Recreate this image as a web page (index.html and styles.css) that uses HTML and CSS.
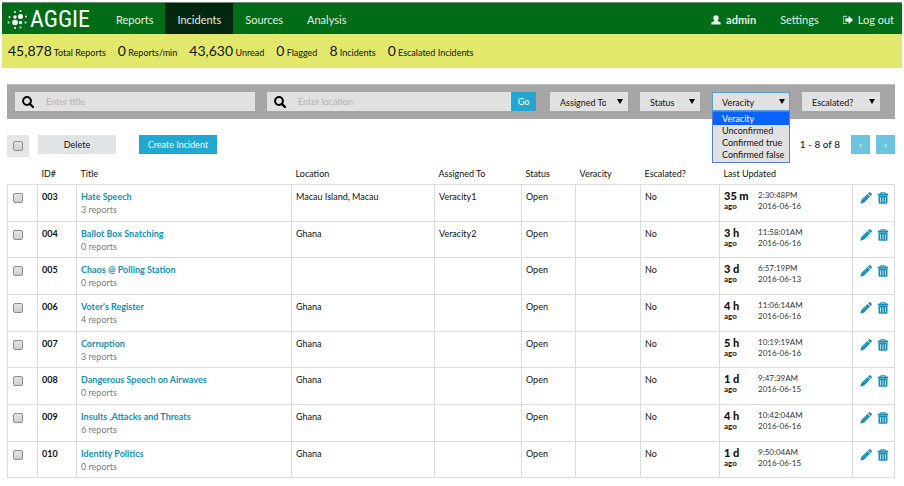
FILE: index.html
```html
<!DOCTYPE html>
<html lang="en">
<head>
<meta charset="utf-8">
<title>Aggie - Incidents</title>
<link rel="stylesheet" href="styles.css">
</head>
<body>
<svg class="sprite" aria-hidden="true">
  <symbol id="pencil" viewBox="0 0 12 12"><path d="M8 1.4L9 0.4Q9.7 -0.2 10.4 0.4L11.6 1.6Q12.2 2.3 11.6 3L10.6 4ZM7.4 2L10 4.6L4.2 10.5L0.3 11.7L1.5 7.8Z"/><path d="M3.2 8L7.6 3.6" stroke="#fff" stroke-opacity=".4" stroke-width=".6"/></symbol>
  <symbol id="trash" viewBox="0 0 12 12"><path fill-rule="evenodd" d="M4 0.2H8Q8.7 0.2 8.7 0.9V1.4H10.6Q11.2 1.4 11.2 2V3.4H0.8V2Q0.8 1.4 1.4 1.4H3.3V0.9Q3.3 0.2 4 0.2ZM4.5 1V1.4H7.5V1ZM1.5 3.8H10.5V10.8Q10.5 11.8 9.5 11.8H2.5Q1.5 11.8 1.5 10.8ZM3.3 5.2V10.4H4V5.2ZM5.6 5.2V10.4H6.4V5.2ZM8 5.2V10.4H8.7V5.2Z"/></symbol>
  <symbol id="search" viewBox="0 0 12 12"><circle cx="5" cy="5" r="3.9" fill="none" stroke="currentColor" stroke-width="2"/><path d="M7.8 7.8L11 11" stroke="currentColor" stroke-width="2.4" stroke-linecap="round"/></symbol>
  <symbol id="user" viewBox="0 0 10 10"><path d="M5 0.3C6.8 0.3 7.7 1.4 7.7 2.9C7.7 4.1 7.1 5.2 6.5 5.7V6.1L8.8 6.9C9.6 7.3 9.8 7.9 9.8 9.6H0.2C0.2 7.9 0.4 7.3 1.2 6.9L3.5 6.1V5.7C2.9 5.2 2.3 4.1 2.3 2.9C2.3 1.4 3.2 0.3 5 0.3Z"/></symbol>
  <symbol id="logout" viewBox="100 150 1550 1500"><path d="M704 1440q0 4 1 20t.5 26.5-3 23.5-10 19.5-20.5 6.5h-320q-119 0-203.5-84.5t-84.5-203.5v-704q0-119 84.5-203.5t203.5-84.5h320q13 0 22.5 9.5t9.5 22.5q0 4 1 20t.5 26.5-3 23.5-10 19.5-20.5 6.5h-320q-66 0-113 47t-47 113v704q0 66 47 113t113 47h312l11.5 1 11.5 3 8 5.5 7 9 2 13.5zm928-544q0 26-19 45l-544 544q-19 19-45 19t-45-19-19-45v-288h-448q-26 0-45-19t-19-45v-384q0-26 19-45t45-19h448v-288q0-26 19-45t45-19 45 19l544 544q19 19 19 45z"/></symbol>
</svg>

<header class="navbar">
  <a class="brand" href="#">
    <svg class="brand-mark" viewBox="0 0 21 20" aria-hidden="true">
      <circle cx="8" cy="8" r="1.7"/><circle cx="13.5" cy="7.5" r="2.5"/><circle cx="8" cy="13.5" r="2.8"/><circle cx="13.5" cy="13.5" r="1.7"/>
      <circle cx="8" cy="3" r="1"/><circle cx="13.5" cy="2" r="1"/><circle cx="2.5" cy="8" r="1"/><circle cx="1.5" cy="13.5" r="1"/><circle cx="19" cy="7.5" r="1"/><circle cx="18.5" cy="13.5" r="1"/><circle cx="8" cy="19" r="1"/><circle cx="13.5" cy="18.5" r="1"/>
    </svg>
    <span>AGGIE</span>
  </a>
  <nav class="nav">
    <a href="#">Reports</a>
    <a class="active" href="#">Incidents</a>
    <a href="#">Sources</a>
    <a href="#">Analysis</a>
  </nav>
  <nav class="nav nav-user">
    <a href="#"><svg class="icon"><use href="#user"/></svg><b>admin</b></a>
    <a href="#">Settings</a>
    <a href="#"><svg class="icon"><use href="#logout"/></svg>Log out</a>
  </nav>
</header>

<section class="stats">
  <span><strong>45,878</strong> Total Reports</span>
  <span><strong>0</strong> Reports/min</span>
  <span><strong>43,630</strong> Unread</span>
  <span><strong>0</strong> Flagged</span>
  <span><strong>8</strong> Incidents</span>
  <span><strong>0</strong> Escalated Incidents</span>
</section>

<main class="content">
  <form class="filters">
    <div class="search search-title">
      <svg><use href="#search"/></svg>
      <input type="text" placeholder="Enter title" aria-label="Title">
    </div>
    <div class="search search-location">
      <svg><use href="#search"/></svg>
      <input type="text" placeholder="Enter location" aria-label="Location">
      <button class="primary" type="button">Go</button>
    </div>
    <div class="pick"><select aria-label="Assigned To"><option>Assigned To</option></select></div>
    <div class="pick narrow"><select aria-label="Status"><option>Status</option></select></div>
    <div class="pick open">
      <select aria-label="Veracity"><option>Veracity</option><option>Unconfirmed</option><option>Confirmed true</option><option>Confirmed false</option></select>
      <ul class="menu" role="listbox" aria-label="Veracity">
        <li class="chosen" role="option" aria-selected="true">Veracity</li>
        <li role="option">Unconfirmed</li>
        <li role="option">Confirmed true</li>
        <li role="option">Confirmed false</li>
      </ul>
    </div>
    <div class="pick"><select aria-label="Escalated?"><option>Escalated?</option></select></div>
  </form>

  <div class="toolbar">
    <label class="check-all"><input type="checkbox" aria-label="Select all"></label>
    <button class="delete" type="button">Delete</button>
    <button class="primary create" type="button">Create Incident</button>
    <div class="pager">
      <span>1 - 8 of 8</span>
      <button type="button" aria-label="Previous page">‹</button>
      <button type="button" aria-label="Next page">›</button>
    </div>
  </div>

  <table class="incidents">
    <colgroup><col class="c-check"><col class="c-id"><col><col class="c-location"><col class="c-assigned"><col class="c-status"><col class="c-veracity"><col class="c-escalated"><col class="c-updated"><col class="c-actions"></colgroup>
    <thead>
      <tr><th></th><th>ID#</th><th>Title</th><th>Location</th><th>Assigned To</th><th>Status</th><th>Veracity</th><th>Escalated?</th><th>Last Updated</th><th></th></tr>
    </thead>
    <tbody>
      <tr>
        <td><input type="checkbox" aria-label="Select 003"></td><td><b>003</b></td>
        <td><a href="#">Hate Speech</a><small>3 reports</small></td>
        <td>Macau Island, Macau</td><td>Veracity1</td><td>Open</td><td></td><td>No</td>
        <td><div class="updated"><div class="age"><b>35 m</b>ago</div><div class="stamp">2:30:48PM<br>2016-06-16</div></div></td>
        <td><div class="actions"><button type="button" aria-label="Edit"><svg><use href="#pencil"/></svg></button><button type="button" aria-label="Delete"><svg><use href="#trash"/></svg></button></div></td>
      </tr>
      <tr>
        <td><input type="checkbox" aria-label="Select 004"></td><td><b>004</b></td>
        <td><a href="#">Ballot Box Snatching</a><small>0 reports</small></td>
        <td>Ghana</td><td>Veracity2</td><td>Open</td><td></td><td>No</td>
        <td><div class="updated"><div class="age"><b>3 h</b>ago</div><div class="stamp">11:58:01AM<br>2016-06-16</div></div></td>
        <td><div class="actions"><button type="button" aria-label="Edit"><svg><use href="#pencil"/></svg></button><button type="button" aria-label="Delete"><svg><use href="#trash"/></svg></button></div></td>
      </tr>
      <tr>
        <td><input type="checkbox" aria-label="Select 005"></td><td><b>005</b></td>
        <td><a href="#">Chaos @ Polling Station</a><small>0 reports</small></td>
        <td></td><td></td><td>Open</td><td></td><td>No</td>
        <td><div class="updated"><div class="age"><b>3 d</b>ago</div><div class="stamp">6:57:19PM<br>2016-06-13</div></div></td>
        <td><div class="actions"><button type="button" aria-label="Edit"><svg><use href="#pencil"/></svg></button><button type="button" aria-label="Delete"><svg><use href="#trash"/></svg></button></div></td>
      </tr>
      <tr>
        <td><input type="checkbox" aria-label="Select 006"></td><td><b>006</b></td>
        <td><a href="#">Voter's Register</a><small>4 reports</small></td>
        <td>Ghana</td><td></td><td>Open</td><td></td><td>No</td>
        <td><div class="updated"><div class="age"><b>4 h</b>ago</div><div class="stamp">11:06:14AM<br>2016-06-16</div></div></td>
        <td><div class="actions"><button type="button" aria-label="Edit"><svg><use href="#pencil"/></svg></button><button type="button" aria-label="Delete"><svg><use href="#trash"/></svg></button></div></td>
      </tr>
      <tr>
        <td><input type="checkbox" aria-label="Select 007"></td><td><b>007</b></td>
        <td><a href="#">Corruption</a><small>3 reports</small></td>
        <td>Ghana</td><td></td><td>Open</td><td></td><td>No</td>
        <td><div class="updated"><div class="age"><b>5 h</b>ago</div><div class="stamp">10:19:19AM<br>2016-06-16</div></div></td>
        <td><div class="actions"><button type="button" aria-label="Edit"><svg><use href="#pencil"/></svg></button><button type="button" aria-label="Delete"><svg><use href="#trash"/></svg></button></div></td>
      </tr>
      <tr>
        <td><input type="checkbox" aria-label="Select 008"></td><td><b>008</b></td>
        <td><a href="#">Dangerous Speech on Airwaves</a><small>0 reports</small></td>
        <td>Ghana</td><td></td><td>Open</td><td></td><td>No</td>
        <td><div class="updated"><div class="age"><b>1 d</b>ago</div><div class="stamp">9:47:39AM<br>2016-06-15</div></div></td>
        <td><div class="actions"><button type="button" aria-label="Edit"><svg><use href="#pencil"/></svg></button><button type="button" aria-label="Delete"><svg><use href="#trash"/></svg></button></div></td>
      </tr>
      <tr>
        <td><input type="checkbox" aria-label="Select 009"></td><td><b>009</b></td>
        <td><a href="#">Insults ,Attacks and Threats</a><small>6 reports</small></td>
        <td>Ghana</td><td></td><td>Open</td><td></td><td>No</td>
        <td><div class="updated"><div class="age"><b>4 h</b>ago</div><div class="stamp">10:42:04AM<br>2016-06-16</div></div></td>
        <td><div class="actions"><button type="button" aria-label="Edit"><svg><use href="#pencil"/></svg></button><button type="button" aria-label="Delete"><svg><use href="#trash"/></svg></button></div></td>
      </tr>
      <tr>
        <td><input type="checkbox" aria-label="Select 010"></td><td><b>010</b></td>
        <td><a href="#">Identity Politics</a><small>0 reports</small></td>
        <td>Ghana</td><td></td><td>Open</td><td></td><td>No</td>
        <td><div class="updated"><div class="age"><b>1 d</b>ago</div><div class="stamp">9:50:04AM<br>2016-06-15</div></div></td>
        <td><div class="actions"><button type="button" aria-label="Edit"><svg><use href="#pencil"/></svg></button><button type="button" aria-label="Delete"><svg><use href="#trash"/></svg></button></div></td>
      </tr>
    </tbody>
  </table>
</main>
</body>
</html>
```
FILE: styles.css
```css
* { box-sizing: border-box; }

body {
  margin: 0;
  padding: 2px 2px 0;
  background: #fff;
  color: #111;
  font: 9px/13px Lato, sans-serif;
}

.sprite { position: absolute; width: 0; height: 0; }
svg { display: block; fill: currentColor; }
a { text-decoration: none; }
button, input, select { margin: 0; padding: 0; border: 0; border-radius: 0; font: inherit; color: inherit; }

/* Navigation */
.navbar {
  display: flex;
  height: 32px;
  border-top: 1px solid #6f8f74;
  background: #006c18;
}
.brand {
  display: flex;
  align-items: center;
  gap: 2px;
  width: 102px;
  padding-left: 5px;
  color: #fff;
  font: 24px/30px "Roboto Condensed", "Liberation Sans Narrow", sans-serif;
}
.brand-mark { width: 21px; height: 20px; }
.nav { display: flex; }
.nav a {
  display: flex;
  align-items: center;
  gap: 5px;
  padding: 2px 12px 0;
  color: #e4f0e4;
  font-size: 11px;
}
.nav .active { background: #02260f; }
.nav-user { margin-left: auto; }
.nav-user a:last-child { padding-right: 8px; }
.icon { width: 10px; height: 10px; }

/* Totals */
.stats {
  display: flex;
  gap: 12px;
  height: 34px;
  padding: 7px 6px 0;
  background: #e2e86c;
  line-height: 20px;
}
.stats strong { font-size: 14px; font-weight: 400; }

.content { padding: 16px 7px 0 5px; }

/* Filters */
.filters {
  display: flex;
  gap: 12px;
  height: 35px;
  padding: 7px 15px 8px 8px;
  border-top: 1px solid #c0c0c0;
  background: #a6a6a6;
}
.search { display: flex; align-items: center; background: #e1e1e1; }
.search-title { flex: 240 1 0; }
.search-location { flex: 269 1 0; margin-right: 2px; }
.search svg { width: 12px; height: 12px; margin: 0 12px 0 7px; color: #000; }
.search input { flex: 1; min-width: 0; background: none; }
.search input::placeholder { color: #b2b2b2; }
.primary { background: #21a7d2; color: #fff; }
.search .primary { align-self: stretch; width: 25px; }
.pick { position: relative; width: 78px; background: #e1e1e1; }
.pick.narrow { width: 60px; }
.pick select {
  width: 100%;
  height: 100%;
  padding: 2px 22px 0 10px;
  appearance: none;
  background: none;
  overflow: hidden;
}
.pick::after {
  content: "";
  position: absolute;
  top: 7px;
  right: 5px;
  border: 3px solid transparent;
  border-top: 5px solid #000;
  border-bottom: 0;
}
.pick.open { outline: 1px solid #5b9ddb; outline-offset: -1px; }
.menu {
  position: absolute;
  z-index: 1;
  top: 100%;
  left: 0;
  right: 0;
  margin: 0;
  padding: 0 0 1px;
  border: 1px solid #4f83c8;
  background: #e1e1e1;
  list-style: none;
}
.menu li { height: 12px; padding-left: 9px; line-height: 12px; white-space: nowrap; }
.menu .chosen { height: 13px; line-height: 13px; background: #0a63ff; color: #fff; }

/* Toolbar */
.toolbar { display: flex; align-items: flex-start; margin-top: 16px; }
.toolbar button { height: 19px; }
.check-all { display: grid; place-items: center; width: 22px; height: 22px; background: #e6e6e6; }
.toolbar .delete { width: 78px; margin: 0 23px 0 9px; background: #e2e3e5; }
.toolbar .create { width: 78px; }
.pager { display: flex; align-items: center; gap: 6px; margin-left: auto; font-size: 10px; }
.pager span { margin-right: 5px; }
.pager button { width: 19px; background: #6cc5df; color: #fff; }

input[type="checkbox"] {
  display: block;
  width: 10px;
  height: 10px;
  appearance: none;
  border: 1px solid #8e8e8e;
  border-radius: 2px;
  background: linear-gradient(#e4e4e4, #cfcfcf);
}

/* Incident list */
.incidents { width: 100%; table-layout: fixed; border-collapse: collapse; }
.c-check { width: 30px; }
.c-id { width: 39px; }
.c-location { width: 143px; }
.c-assigned { width: 87px; }
.c-status { width: 54px; }
.c-veracity { width: 65px; }
.c-escalated { width: 79px; }
.c-updated { width: 133px; }
.c-actions { width: 42px; }
.incidents th { height: 27px; padding: 7px 4px 0; font-weight: 400; text-align: left; }
.incidents td { padding: 5px 4px 0; border: 1px solid #dcdcdc; vertical-align: top; }
.incidents td:first-child { padding-left: 5px; }
.incidents tbody tr { height: 37px; }
.incidents tbody tr:nth-child(3n+2) { height: 36px; }
.incidents td input { margin-top: 3px; }
.incidents td a { color: #148fb5; font-weight: 700; }
.incidents small { display: block; color: #808080; font-size: 9px; }
.updated { display: flex; }
.age { width: 34px; font-size: 8px; font-weight: 700; line-height: 8px; }
.age b { display: block; font-size: 11px; line-height: 12px; }
.stamp { color: #333; font-size: 8px; line-height: 11px; }
.actions { display: flex; gap: 5px; padding: 2px 0 0 3px; }
.actions button { background: none; color: #148fb5; }
.actions svg { width: 12px; height: 12px; }
```
